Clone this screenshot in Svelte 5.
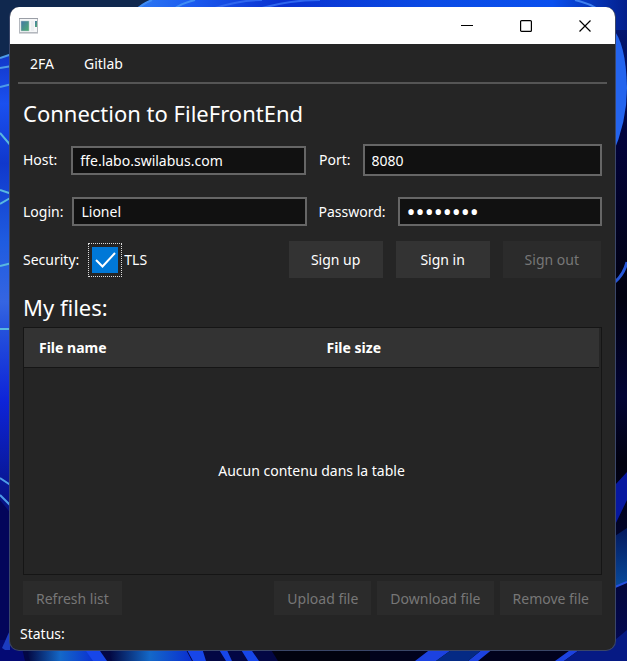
<script>
  let host = $state('ffe.labo.swilabus.com');
  let port = $state('8080');
  let login = $state('Lionel');
  let password = $state('labopass');
  let tls = $state(true);
</script>

<div class="desktop">
  <svg class="wallpaper" viewBox="0 0 627 661" preserveAspectRatio="none" aria-hidden="true">
    <defs>
      <linearGradient id="top" x1="0" x2="1" y1="0" y2="0">
        <stop offset="0" stop-color="#2f7cf2" />
        <stop offset=".12" stop-color="#1c5cf0" />
        <stop offset=".3" stop-color="#0a32d0" />
        <stop offset=".6" stop-color="#0b4be4" />
        <stop offset=".85" stop-color="#0a50ee" />
        <stop offset="1" stop-color="#031f8c" />
      </linearGradient>
      <linearGradient id="left" x1="0" x2="0" y1="0" y2="1">
        <stop offset="0" stop-color="#1236c8" />
        <stop offset=".1" stop-color="#1a50f0" />
        <stop offset=".22" stop-color="#1038cc" />
        <stop offset=".38" stop-color="#1f5ce0" />
        <stop offset=".5" stop-color="#3565e2" />
        <stop offset=".56" stop-color="#2450dc" />
        <stop offset=".7" stop-color="#0e24d8" />
        <stop offset=".82" stop-color="#0a1ba8" />
        <stop offset="1" stop-color="#04085e" />
      </linearGradient>
      <linearGradient id="right" x1="0" x2="0" y1="0" y2="1">
        <stop offset="0" stop-color="#031c80" />
        <stop offset=".2" stop-color="#02033c" />
        <stop offset=".45" stop-color="#01010f" />
        <stop offset=".6" stop-color="#020434" />
        <stop offset=".7" stop-color="#01010f" />
        <stop offset="1" stop-color="#040a58" />
      </linearGradient>
      <linearGradient id="glow" x1="0" x2="0" y1="0" y2="1">
        <stop offset="0" stop-color="#04185c" />
        <stop offset="1" stop-color="#074a9c" />
      </linearGradient>
      <linearGradient id="petal" x1="0" x2="1" y1="0" y2="0">
        <stop offset="0" stop-color="#02043c" />
        <stop offset=".5" stop-color="#1468c8" />
        <stop offset="1" stop-color="#0a2ed0" />
      </linearGradient>
    </defs>
    <rect width="627" height="661" fill="#01021c" />
    <rect x="610" width="17" height="661" fill="url(#right)" />
    <rect x="130" width="497" height="30" fill="url(#top)" />
    <path d="M0 0H152Q142 4 136 10V60H0Z" fill="#10284e" />
    <path d="M152 0Q142 4 136 10M195 0Q182 3 174 9" fill="none" stroke="#3f8cf4" stroke-width="2" />
    <path d="M215 8Q240 0 262 0M262 8Q290 0 320 0" fill="none" stroke="#2f66ee" stroke-width="2" />
    <path d="M575 0Q588 3 598 9" fill="none" stroke="#3f80f0" stroke-width="2" />
    <path d="M0 58L12 54V550H0Z" fill="url(#left)" />
    <g fill="none" stroke="#4d9be8" stroke-width="2">
      <path d="M0 58L12 54M0 68L12 66M0 87L12 84" />
      <path d="M0 133L12 147M0 190L12 194M0 204L12 197M0 266L12 263M0 329H12" stroke="#58b8e0" />
      <path d="M0 478L12 486M0 495L12 507" />
    </g>
    <path d="M0 500L12 515V661H0Z" fill="#03055a" />
    <path d="M612 28Q626 42 627 88Q627 122 612 156Z" fill="#2464ee" />
    <path d="M615 282Q624 274 627 262" fill="none" stroke="#2455d8" stroke-width="3" />
    <path d="M615 485L627 472V500L615 525Z" fill="#0718a0" />
    <path d="M615 536L627 528V582L615 587Z" fill="url(#glow)" />
    <path d="M615 587L627 582" stroke="#2450e0" stroke-width="2" />
    <path d="M0 640H20L30 661H0Z" fill="#040a74" />
    <path d="M2 648L10 630V650H5Z" fill="#1c3cc0" />
    <path d="M22 648H280L300 661H25Z" fill="#030744" />
    <path d="M26 648H85L95 661H30Z" fill="url(#petal)" />
    <path d="M84 648H98L107 661H93Z" fill="#1746e8" />
    <path d="M108 648H185L192 661H112Z" fill="url(#petal)" />
    <path d="M186 648H202L206 661H193ZM218 648H226L232 661H226ZM240 648H250L259 661H248Z" fill="#1746e8" />
    <path d="M270 648H370V661H278Z" fill="#01020e" />
    <path d="M415 661L432 648H454L436 661ZM468 661L484 648H494L478 661ZM555 661L573 648H582L564 661Z" fill="#1c42e0" />
    <path d="M436 661L454 648H484L468 661Z" fill="#052a84" />
    <path d="M564 661L582 648L615 640L627 630V661Z" fill="#061a84" />
  </svg>

  <main class="window">
    <header class="titlebar">
      <svg class="appicon" width="20" height="16" viewBox="0 0 20 16" role="img" aria-label="FileFrontEnd">
        <defs>
          <linearGradient id="screen" x1="0" y1="0" x2="1" y2="1">
            <stop offset="0" stop-color="#4676a8" />
            <stop offset="1" stop-color="#4fb070" />
          </linearGradient>
        </defs>
        <rect x=".5" y=".5" width="18" height="14" fill="#f6f7f8" stroke="#b4b8be" />
        <path d="M0 .5H19" stroke="#9a9ea6" />
        <path d="M0 15.500H19" stroke="#d4d6da" />
        <rect x="2" y="3" width="8" height="10" fill="url(#screen)" stroke="#b5c8c6" stroke-width=".5" />
        <rect x="12" y="3" width="3" height="10" fill="#eceef1" />
        <rect x="16" y="3" width="2" height="6" fill="url(#screen)" />
      </svg>
      <div class="controls">
        <button aria-label="Minimize"><svg width="12" height="12" viewBox="0 0 12 12"><path d="M0 5.500H12" /></svg></button>
        <button aria-label="Maximize"><svg width="12" height="12" viewBox="0 0 12 12"><rect x=".6" y=".6" width="10.800" height="10.800" rx="1" /></svg></button>
        <button aria-label="Close"><svg width="12" height="12" viewBox="0 0 12 12"><path d="M.5 .5L11.500 11.500M11.500 .5L.5 11.500" /></svg></button>
      </div>
    </header>

    <nav>
      <button>2FA</button>
      <button>Gitlab</button>
    </nav>

    <form class="content" onsubmit={(e) => e.preventDefault()}>
      <h1>Connection to FileFrontEnd</h1>
      <div class="row first">
        <div class="field left"><label for="host">Host:</label><input id="host" type="text" bind:value={host} /></div>
        <div class="field port"><label for="port">Port:</label><input id="port" type="text" bind:value={port} /></div>
      </div>
      <div class="row second">
        <div class="field left"><label for="login">Login:</label><input id="login" type="text" bind:value={login} /></div>
        <div class="field"><label for="password">Password:</label><input id="password" type="password" bind:value={password} /></div>
      </div>
      <div class="row actions">
        <span class="security">Security:</span>
        <label class="check">
          <span class="focus"><input type="checkbox" bind:checked={tls} />
            <svg width="26" height="26" viewBox="0 0 26 26" aria-hidden="true"><path d="M4 13L10.500 19.500L23 6" /></svg>
          </span>
          TLS
        </label>
        <button class="btn push">Sign up</button>
        <button class="btn">Sign in</button>
        <button class="btn" disabled>Sign out</button>
      </div>

      <h2>My files:</h2>
      <div class="tablebox">
        <table>
          <thead><tr><th scope="col">File name</th><th scope="col">File size</th></tr></thead>
          <tbody><tr><td colspan="2">Aucun contenu dans la table</td></tr></tbody>
        </table>
      </div>
      <div class="row files">
        <button class="btn" disabled>Refresh list</button>
        <button class="btn push" disabled>Upload file</button>
        <button class="btn" disabled>Download file</button>
        <button class="btn" disabled>Remove file</button>
      </div>
    </form>
    <footer>Status:</footer>
  </main>
</div>

<style>
  .desktop {
    position: relative;
    box-sizing: border-box;
    min-height: 100vh;
    padding: 7px 11px 10px 9px;
    background: #01021c;
    font: 14px/20px "Noto Sans", "Open Sans", sans-serif;
    color: #fff;
    display: flex;
  }
  .wallpaper {
    position: absolute;
    inset: 0;
    width: 100%;
    height: 100%;
  }
  .window {
    position: relative;
    flex: 1;
    min-width: 0;
    display: flex;
    flex-direction: column;
    background: #252525;
    border: 1px solid #3a4668;
    border-top: 0;
    border-radius: 10px;
    overflow: hidden;
  }
  button, input { font: inherit; color: inherit; box-sizing: border-box; }
  button { border: 0; background: none; padding: 0; }
  .titlebar {
    display: flex;
    align-items: center;
    justify-content: space-between;
    height: 37px;
    padding-left: 9px;
    background: #fff;
  }
  .appicon { display: block; }
  .controls { display: flex; padding-right: 1px; }
  .controls button {
    width: 59px;
    height: 36px;
    display: grid;
    place-items: center;
  }
  .controls svg { fill: none; stroke: #000; stroke-width: 1.2; }
  nav {
    display: flex;
    gap: 30px;
    height: 38px;
    margin: 0 8px;
    padding-left: 12px;
    border-bottom: 2px solid #555;
  }
  nav button { padding-top: 2px; }
  .content {
    flex: 1;
    display: flex;
    flex-direction: column;
    padding: 0 13px;
  }
  h1, h2 {
    margin: 13px 0 0;
    font-size: 22px;
    line-height: 32px;
    font-weight: 400;
  }
  .row { display: flex; align-items: center; }
  .first { height: 32px; margin-top: 15px; gap: 13px; }
  .second { height: 29px; margin-top: 21px; gap: 12px; }
  .field { display: flex; align-items: center; flex: 1; min-width: 0; }
  .left { gap: 9px; }
  .first .left { gap: 14px; }
  .field:not(.left) { gap: 12px; }
  .field input {
    flex: 1;
    min-width: 0;
    width: 0;
    height: 29px;
    padding: 0 7px;
    border: 2px solid #666;
    border-radius: 0;
    background: #111;
    outline: 0;
  }
  .field.port input { height: 32px; }
  .field input[type="password"] { font-size: 24px; }
  .actions { height: 37px; margin-top: 15px; padding-right: 1px; gap: 13px; }
  .security { margin-right: -4px; }
  .check { display: flex; align-items: center; gap: 2px; }
  .focus {
    display: grid;
    padding: 3px;
    border: 1px dotted #ddd;
  }
  .focus input, .focus svg { grid-area: 1 / 1; }
  .focus input {
    appearance: none;
    width: 26px;
    height: 26px;
    margin: 0;
    background: #111;
    border: 2px solid #666;
  }
  .focus input:checked { background: #0078d7; border: 0; }
  .focus svg { fill: none; stroke: #fff; stroke-width: 2; pointer-events: none; visibility: hidden; }
  .focus input:checked + svg { visibility: visible; }
  .btn {
    min-width: 94px;
    height: 37px;
    padding: 0 22px;
    background: #333;
    white-space: nowrap;
  }
  .btn:disabled { background: #2b2b2b; color: #777; }
  .push { margin-left: auto; }
  .tablebox {
    flex: 1;
    display: flex;
    margin-top: 4px;
    padding-right: 2px;
    border: 1px solid #151515;
    min-height: 246px;
    box-sizing: border-box;
  }
  table { width: 100%; border-collapse: collapse; table-layout: fixed; }
  th {
    height: 39px;
    padding: 1px 15px 0;
    background: #333;
    border-bottom: 1px solid #151515;
    text-align: left;
    box-sizing: border-box;
  }
  td { text-align: center; padding: 0; }
  .files { gap: 6px; margin-top: 6px; }
  .files .btn { height: 34px; padding: 1px 13px 0; }
  footer { height: 35px; padding: 9px 10px 0; box-sizing: border-box; }
</style>
